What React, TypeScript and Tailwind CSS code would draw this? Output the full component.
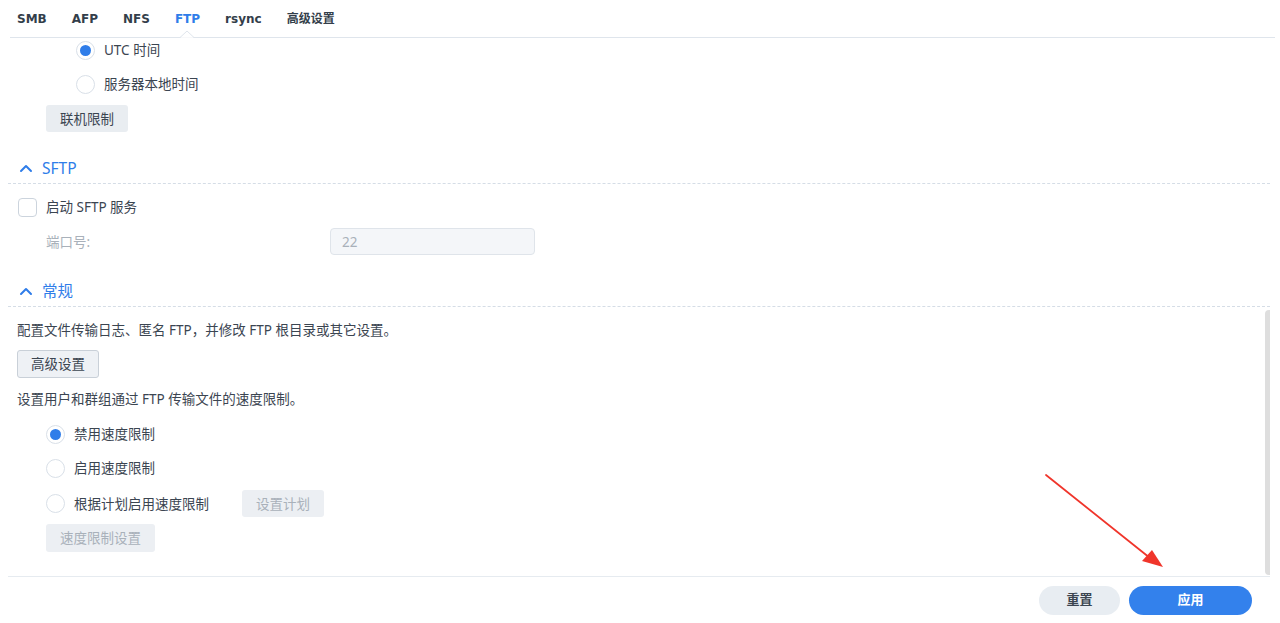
import React from "react";

const FONT = { fontFamily: '"Noto Sans", "Noto Sans CJK SC", sans-serif' };
const TAB_FONT = { fontFamily: '"DejaVu Sans", "Noto Sans CJK SC", sans-serif' };

function Radio({ checked }: { checked?: boolean }) {
  return (
    <span className="flex h-[19px] w-[19px] shrink-0 items-center justify-center rounded-full border border-[#d9e0e8] bg-white">
      {checked && <span className="h-[11px] w-[11px] rounded-full bg-[#2f7de9]" />}
    </span>
  );
}

function RadioRow({ checked, label, className = "" }: { checked?: boolean; label: string; className?: string }) {
  return (
    <div className={`flex h-[24px] items-center gap-[9px] ${className}`}>
      <Radio checked={checked} />
      <span className="text-[13.5px] leading-[20px] text-[#3b4551]">{label}</span>
    </div>
  );
}

function Chevron() {
  return (
    <svg width="14" height="10" viewBox="0 0 14 10" className="shrink-0">
      <polyline points="2,8 7,3 12,8" fill="none" stroke="#2f7de9" strokeWidth="2" strokeLinecap="round" strokeLinejoin="round" />
    </svg>
  );
}

function SectionHeader({ title, className = "" }: { title: string; className?: string }) {
  return (
    <div className={`flex h-[34px] items-center gap-[9px] border-b border-dashed border-[#d5dde6] pl-[11px] pt-[2px] ${className}`}>
      <Chevron />
      <span className="text-[15.5px] leading-[22px] text-[#2f7de9]">{title}</span>
    </div>
  );
}

function GrayButton({ children, disabled, bordered, className = "" }: { children: React.ReactNode; disabled?: boolean; bordered?: boolean; className?: string }) {
  return (
    <div
      className={`flex h-[27px] items-center justify-center rounded-[3px] text-[13.5px] leading-[20px] ${
        disabled ? "bg-[#eceff3] text-[#a9b1ba]" : bordered ? "border border-[#c9d0d8] bg-[#eef1f5] text-[#3b4551]" : "bg-[#e9edf1] text-[#3b4551]"
      } ${className}`}
    >
      {children}
    </div>
  );
}

export default function App() {
  return (
    <div className="relative flex h-[623px] w-full flex-col overflow-hidden bg-white" style={FONT}>
      {/* Tabs */}
      <div className="relative mx-[10px] mr-[5px] flex h-[38px] shrink-0 items-center gap-[25px] border-b border-[#dfe5ec] pl-[7px]" style={TAB_FONT}>
        {["SMB", "AFP", "NFS", "FTP", "rsync", "高级设置"].map((t) => (
          <span key={t} className={`text-[12px] font-bold ${t === "FTP" ? "text-[#2f7de9]" : "text-[#333e4a]"}`}>
            {t}
          </span>
        ))}
        <svg width="14" height="8" viewBox="0 0 14 8" className="absolute bottom-[-1px] left-[170px]">
          <polyline points="0,7.5 7,1 14,7.5" fill="white" stroke="#dfe5ec" strokeWidth="1" />
          <rect x="1" y="7.5" width="12" height="1" fill="white" />
        </svg>
      </div>

      {/* Content */}
      <div className="relative mx-[8px] mr-[10px] flex flex-1 flex-col overflow-hidden">
        <div className="flex flex-col pl-[68px]">
          <RadioRow checked label="UTC 时间" />
          <RadioRow label="服务器本地时间" className="mt-[10px]" />
        </div>
        <div className="pl-[38px]">
          <GrayButton className="mt-[9px] w-[82px]">联机限制</GrayButton>
        </div>

        <SectionHeader title="SFTP" className="mt-[18px]" />
        <div className="mt-[11px] flex h-[24px] items-center gap-[9px] pl-[10px]">
          <span className="h-[19px] w-[19px] rounded-[4px] border border-[#ccd4dd] bg-white" />
          <span className="text-[13.5px] leading-[20px] text-[#3b4551]">启动 SFTP 服务</span>
        </div>
        <div className="mt-[9px] flex h-[27px] items-center pl-[38px]">
          <span className="w-[284px] text-[13.5px] leading-[20px] text-[#a9b1ba]">端口号:</span>
          <div className="flex h-[27px] w-[205px] items-center rounded-[4px] border border-[#dfe4ea] bg-[#f4f6f9] pl-[11px] text-[13.5px] leading-[20px] text-[#a9b1ba]">
            22
          </div>
        </div>

        <SectionHeader title="常规" className="mt-[18px]" />
        <div className="pl-[9px]">
          <p className="mt-[13px] h-[20px] text-[13.5px] leading-[20px] text-[#3b4551]">
            配置文件传输日志、匿名 FTP，并修改 FTP 根目录或其它设置。
          </p>
          <GrayButton bordered className="mt-[10px] h-[28px] w-[82px]">高级设置</GrayButton>
          <p className="mt-[11px] h-[20px] text-[13.5px] leading-[20px] text-[#3b4551]">
            设置用户和群组通过 FTP 传输文件的速度限制。
          </p>
          <div className="flex flex-col pl-[29px]">
            <RadioRow checked label="禁用速度限制" className="mt-[13px]" />
            <RadioRow label="启用速度限制" className="mt-[10px]" />
            <div className="mt-[10px] flex h-[27px] items-center">
              <RadioRow label="根据计划启用速度限制" className="w-[196px]" />
              <GrayButton disabled className="w-[82px]">设置计划</GrayButton>
            </div>
            <GrayButton disabled className="mt-[7px] h-[28px] w-[109px]">速度限制设置</GrayButton>
          </div>
        </div>

        {/* scrollbar thumb */}
        <div className="absolute right-[-3px] top-[272px] h-[265px] w-[8px] rounded-full bg-[#dedede]" />
      </div>

      {/* Footer */}
      <div className="mx-[8px] mr-[10px] flex h-[47px] shrink-0 items-center justify-end gap-[9px] border-t border-[#e6ebf0] pr-[18px]">
        <div className="flex h-[29px] w-[81px] items-center justify-center rounded-full bg-[#e8edf2] text-[13px] font-bold text-[#3b4551]">
          重置
        </div>
        <div className="flex h-[29px] w-[123px] items-center justify-center rounded-full bg-[#3381ec] text-[13px] font-bold text-white">
          应用
        </div>
      </div>

      {/* Red arrow annotation */}
      <svg className="pointer-events-none absolute left-0 top-0" width="1280" height="623" viewBox="0 0 1280 623">
        <line x1="1046" y1="475" x2="1150" y2="558" stroke="#f0352b" strokeWidth="1.8" strokeLinecap="round" />
        <polygon points="1163,567 1142,561 1152,550" fill="#f0352b" />
      </svg>
    </div>
  );
}
